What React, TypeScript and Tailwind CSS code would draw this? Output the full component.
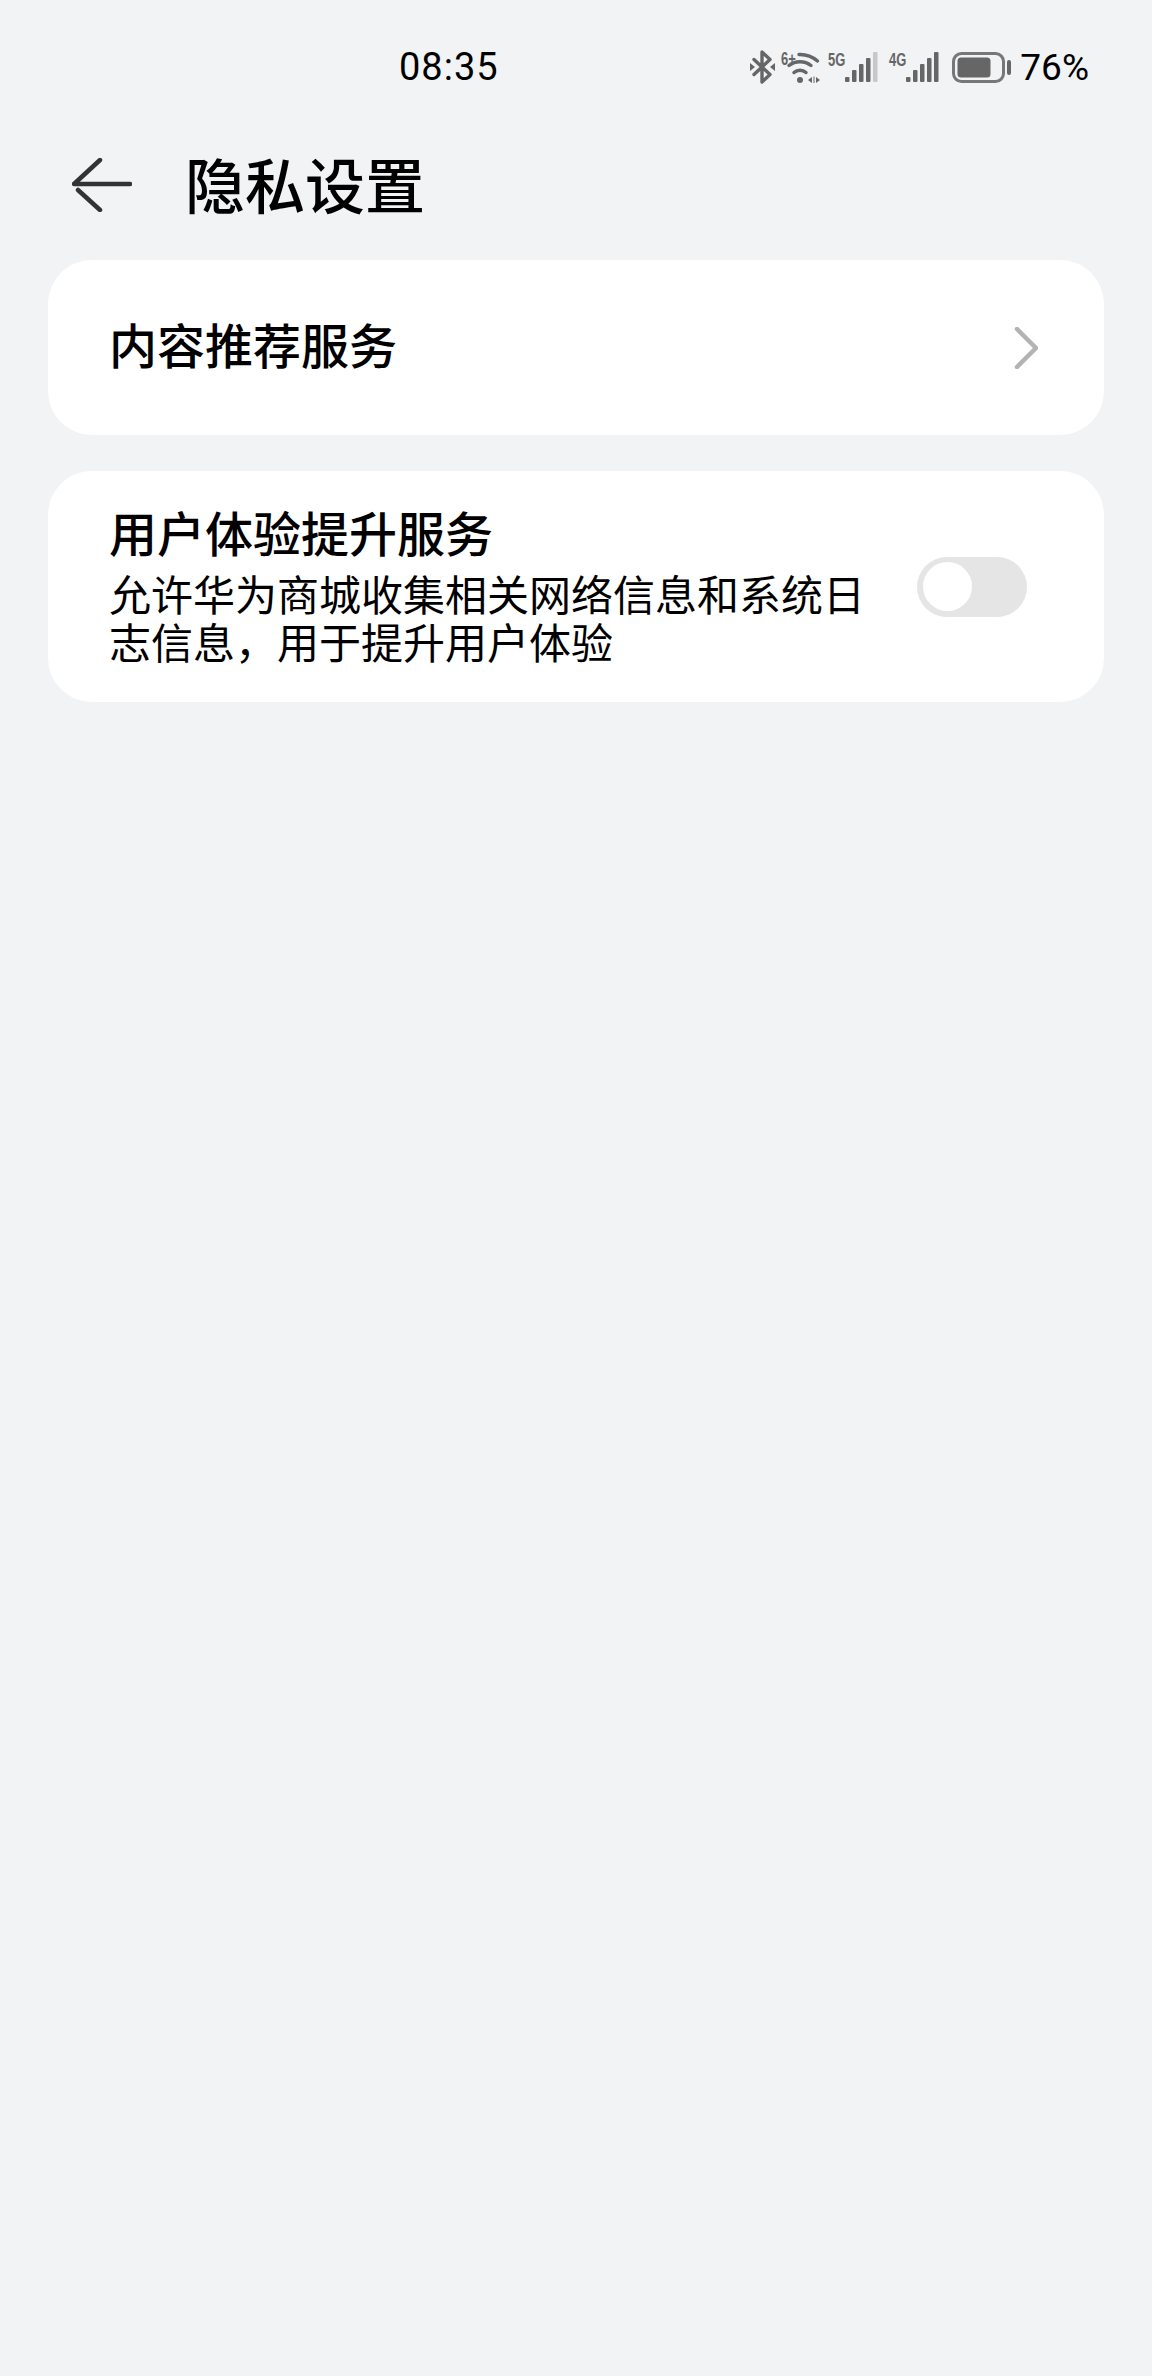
function BluetoothIcon() {
  return (
    <svg width="25" height="34" viewBox="0 0 25 34" fill="none" stroke="#666" strokeWidth="3.4">
      <path d="M4 9.5 L20 24.5 L12 32 V2 L20 9.5 L4 24.5" strokeLinejoin="round" strokeLinecap="round" />
      <path d="M0 13 L5 17 L0 21 Z" fill="#666" stroke="none" />
      <path d="M25 13 L20 17 L25 21 Z" fill="#666" stroke="none" />
    </svg>
  )
}

function WifiIcon() {
  return (
    <svg width="39" height="31" viewBox="0 0 39 31" fill="none" stroke="#666" strokeWidth="3.4" strokeLinecap="round" className="overflow-visible">
      <text transform="scale(0.72 1)" x="0" y="13" fill="#666" stroke="none" className="text-[18px] font-bold [font-family:'Liberation_Sans',sans-serif]">
        6+
      </text>
      <path d="M18 2.5 A 27 27 0 0 1 36.5 9" />
      <path d="M8 13.5 A 18 18 0 0 1 30 13.5" />
      <path d="M13 20.5 A 9 9 0 0 1 25 20.5" />
      <circle cx="19" cy="28" r="3" fill="#666" stroke="none" />
      <path d="M31 25 L27 28 L31 31 Z M35 25 L39 28 L35 31 Z" fill="#666" stroke="none" />
      <path d="M33 24.5 V31" strokeWidth="1" strokeLinecap="butt" />
    </svg>
  )
}

function SignalIcon({ label, lastBarLight }: { label: string; lastBarLight?: boolean }) {
  const bars = [
    { x: 17, y: 25, h: 5 },
    { x: 24, y: 18, h: 12 },
    { x: 31, y: 12, h: 18 },
    { x: 38, y: 6, h: 24 },
    { x: 45, y: 0, h: 30 }
  ]

  return (
    <svg width="50" height="31" viewBox="0 0 50 31" className="overflow-visible">
      <text transform="scale(0.72 1)" x="0" y="14" fill="#666" className="text-[18px] font-bold [font-family:'Liberation_Sans',sans-serif]">
        {label}
      </text>
      {bars.map((bar, i) => (
        <rect
          key={bar.x}
          x={bar.x}
          y={bar.y}
          width="4.5"
          height={bar.h}
          rx="1"
          fill={lastBarLight && i === 4 ? '#c8c8c8' : '#666'}
        />
      ))}
    </svg>
  )
}

function BatteryIcon() {
  return (
    <svg width="59" height="31" viewBox="0 0 59 31" fill="none">
      <rect x="1.5" y="1.5" width="50" height="28" rx="8" stroke="#777" strokeWidth="3" />
      <rect x="5.5" y="5.5" width="33" height="20" rx="3.5" fill="#666" />
      <rect x="55" y="8" width="4" height="15" rx="2" fill="#666" />
    </svg>
  )
}

function StatusBar() {
  return (
    <div className="flex h-[90px] items-center justify-between pl-[399px] pr-[63px] pt-[44px]">
      <span className="text-[38px] leading-none tracking-[1px] text-black [font-family:Roboto,sans-serif]">08:35</span>
      <div className="flex items-center">
        <BluetoothIcon />
        <div className="ml-[6px]">
          <WifiIcon />
        </div>
        <div className="ml-[8px]">
          <SignalIcon label="5G" lastBarLight />
        </div>
        <div className="ml-[11px]">
          <SignalIcon label="4G" />
        </div>
        <div className="ml-[13px]">
          <BatteryIcon />
        </div>
        <span className="ml-[9px] text-[37px] leading-none text-black [font-family:Roboto,sans-serif]">76%</span>
      </div>
    </div>
  )
}

export default function App() {
  return (
    <div className="min-h-[2376px] bg-[#f2f3f5] [font-family:'Noto_Sans_CJK_SC',sans-serif]">
      <StatusBar />

      <div className="flex h-[170px] items-center pl-[72px] pt-[20px]">
        <svg width="60" height="54" viewBox="0 0 60 54" fill="none" stroke="#333" strokeWidth="4.5" strokeLinecap="round">
          <path d="M28 2 L2 26 H58" strokeLinejoin="round" />
          <path d="M6 32 L28 52" />
        </svg>
        <h1 className="mb-[4px] ml-[53px] text-[60px] leading-none font-medium text-black">隐私设置</h1>
      </div>

      <div className="flex flex-col gap-[36px] px-[48px]">
        <div className="flex h-[175px] items-center justify-between rounded-[44px] bg-white pl-[61px] pr-[66px]">
          <span className="mb-[10px] text-[48px] leading-none font-medium text-black">内容推荐服务</span>
          <svg width="24" height="42" viewBox="0 0 24 42" fill="none" stroke="#b3b3b3" strokeWidth="4.5" strokeLinecap="round" strokeLinejoin="round">
            <path d="M3 2 L22 21 L3 40" />
          </svg>
        </div>

        <div className="flex h-[231px] items-center justify-between rounded-[44px] bg-white pl-[61px] pr-[77px]">
          <div className="mb-[8px] w-[760px]">
            <div className="mb-[8px] text-[48px] leading-[60px] font-medium text-black">用户体验提升服务</div>
            <div className="text-[42px] leading-[48px] text-black">
              允许华为商城收集相关网络信息和系统日志信息，用于提升用户体验
            </div>
          </div>
          <div className="flex h-[60px] w-[110px] items-center rounded-full bg-[#e5e5e5] pl-[6px]">
            <div className="h-[49px] w-[49px] rounded-full bg-white" />
          </div>
        </div>
      </div>
    </div>
  )
}
